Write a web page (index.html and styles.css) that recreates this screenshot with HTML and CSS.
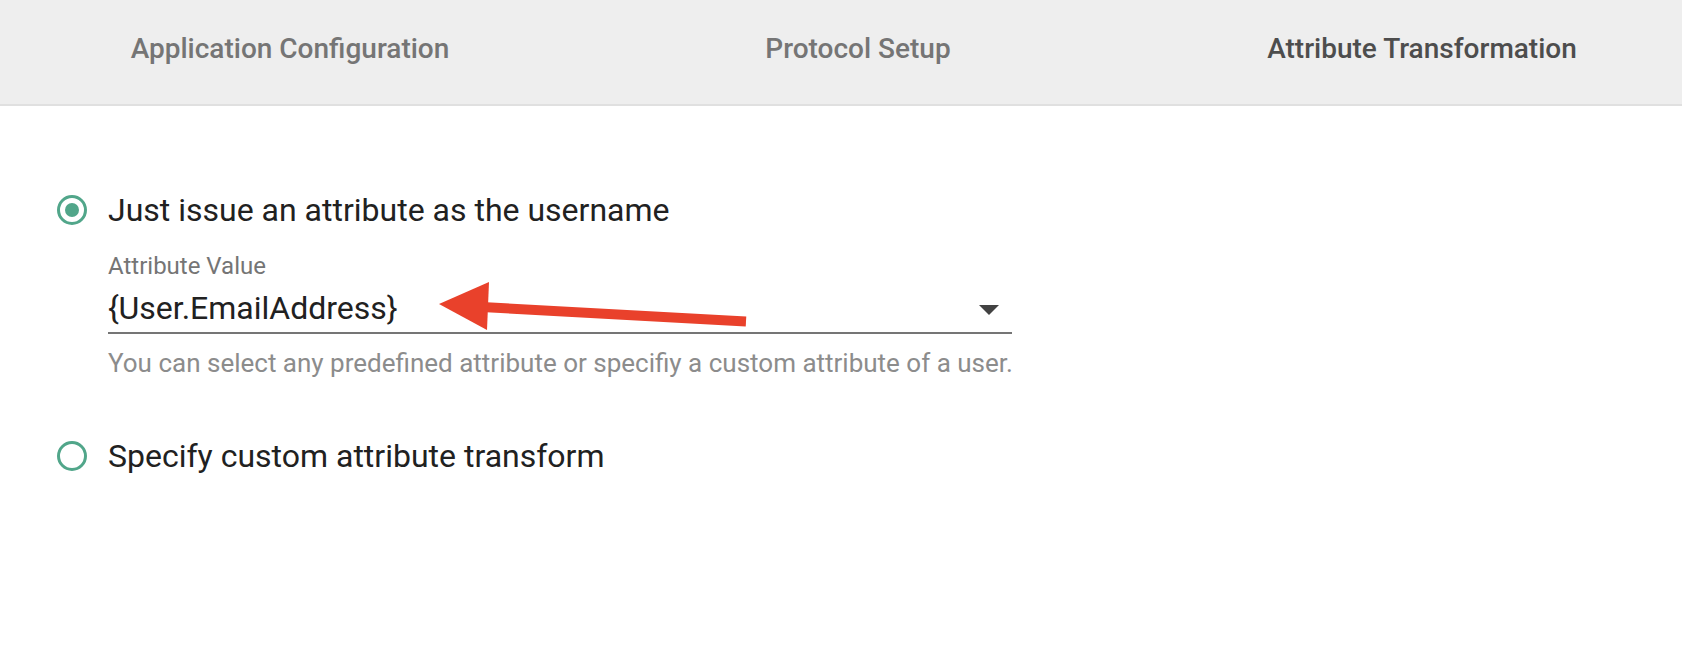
FILE: index.html
```html
<!DOCTYPE html>
<html lang="en">
<head>
<meta charset="utf-8">
<title>Attribute Transformation</title>
<link rel="stylesheet" href="styles.css">
</head>
<body>
<header class="tabs">
  <div class="tab">Application Configuration</div>
  <div class="tab">Protocol Setup</div>
  <div class="tab tab-active">Attribute Transformation</div>
</header>
<main class="content">
  <div class="option">
    <span class="radio radio-checked"><span class="radio-dot"></span></span>
    <span class="option-label">Just issue an attribute as the username</span>
  </div>
  <div class="field">
    <div class="field-label">Attribute Value</div>
    <div class="field-input">
      <span class="field-value">{User.EmailAddress}</span>
      <span class="caret"></span>
    </div>
    <div class="field-help">You can select any predefined attribute or specifiy a custom attribute of a user.</div>
    <svg class="annotation" width="330" height="62" viewBox="0 0 330 62" aria-hidden="true">
      <line x1="52" y1="32" x2="316" y2="46.5" stroke="#e9412b" stroke-width="10"/>
      <polygon points="9,29 59,7 57,55" fill="#e9412b"/>
    </svg>
  </div>
  <div class="option option-second">
    <span class="radio"></span>
    <span class="option-label">Specify custom attribute transform</span>
  </div>
</main>
</body>
</html>
```
FILE: styles.css
```css
html, body {
  margin: 0;
  padding: 0;
  background: #ffffff;
  font-family: Roboto, "Liberation Sans", sans-serif;
  overflow: hidden;
}

.tabs {
  height: 104px;
  background: #eeeeee;
  border-bottom: 2px solid #e0e0e0;
  display: grid;
  grid-template-columns: 566px 570px 558px;
  padding-left: 7px;
  overflow: hidden;
  box-sizing: content-box;
}

.tab {
  padding-top: 33px;
  font-size: 28px;
  line-height: 32px;
  font-weight: 500;
  color: #757575;
  text-align: center;
  white-space: nowrap;
}

.tab-active {
  color: #4d4d4d;
}

.content {
  padding: 85px 0 0 57px;
}

.option {
  display: flex;
  align-items: center;
  gap: 21px;
  height: 38px;
}

.option-second {
  margin-top: 59px;
}

.option-label {
  font-size: 32px;
  line-height: 38px;
  color: #212121;
  white-space: nowrap;
}

.radio {
  width: 30px;
  height: 30px;
  box-sizing: border-box;
  border: 3px solid #51a68a;
  border-radius: 50%;
  display: flex;
  align-items: center;
  justify-content: center;
  flex: none;
}

.radio-dot {
  width: 14px;
  height: 14px;
  border-radius: 50%;
  background: #51a68a;
}

.field {
  position: relative;
  margin: 23px 0 0 51px;
  width: 904px;
}

.field-label {
  font-size: 24px;
  line-height: 28px;
  color: #757575;
}

.field-input {
  margin-top: 9px;
  display: flex;
  align-items: center;
  justify-content: space-between;
  padding-bottom: 5px;
  border-bottom: 2px solid #757575;
}

.field-value {
  font-size: 32px;
  line-height: 38px;
  color: #212121;
}

.caret {
  width: 0;
  height: 0;
  border-left: 10px solid transparent;
  border-right: 10px solid transparent;
  border-top: 10px solid #424242;
  margin-right: 13px;
  margin-top: 4px;
}

.field-help {
  margin-top: 14px;
  font-size: 26px;
  line-height: 30px;
  color: #8c8c8c;
  white-space: nowrap;
}

.annotation {
  position: absolute;
  left: 322px;
  top: 23px;
}
```
